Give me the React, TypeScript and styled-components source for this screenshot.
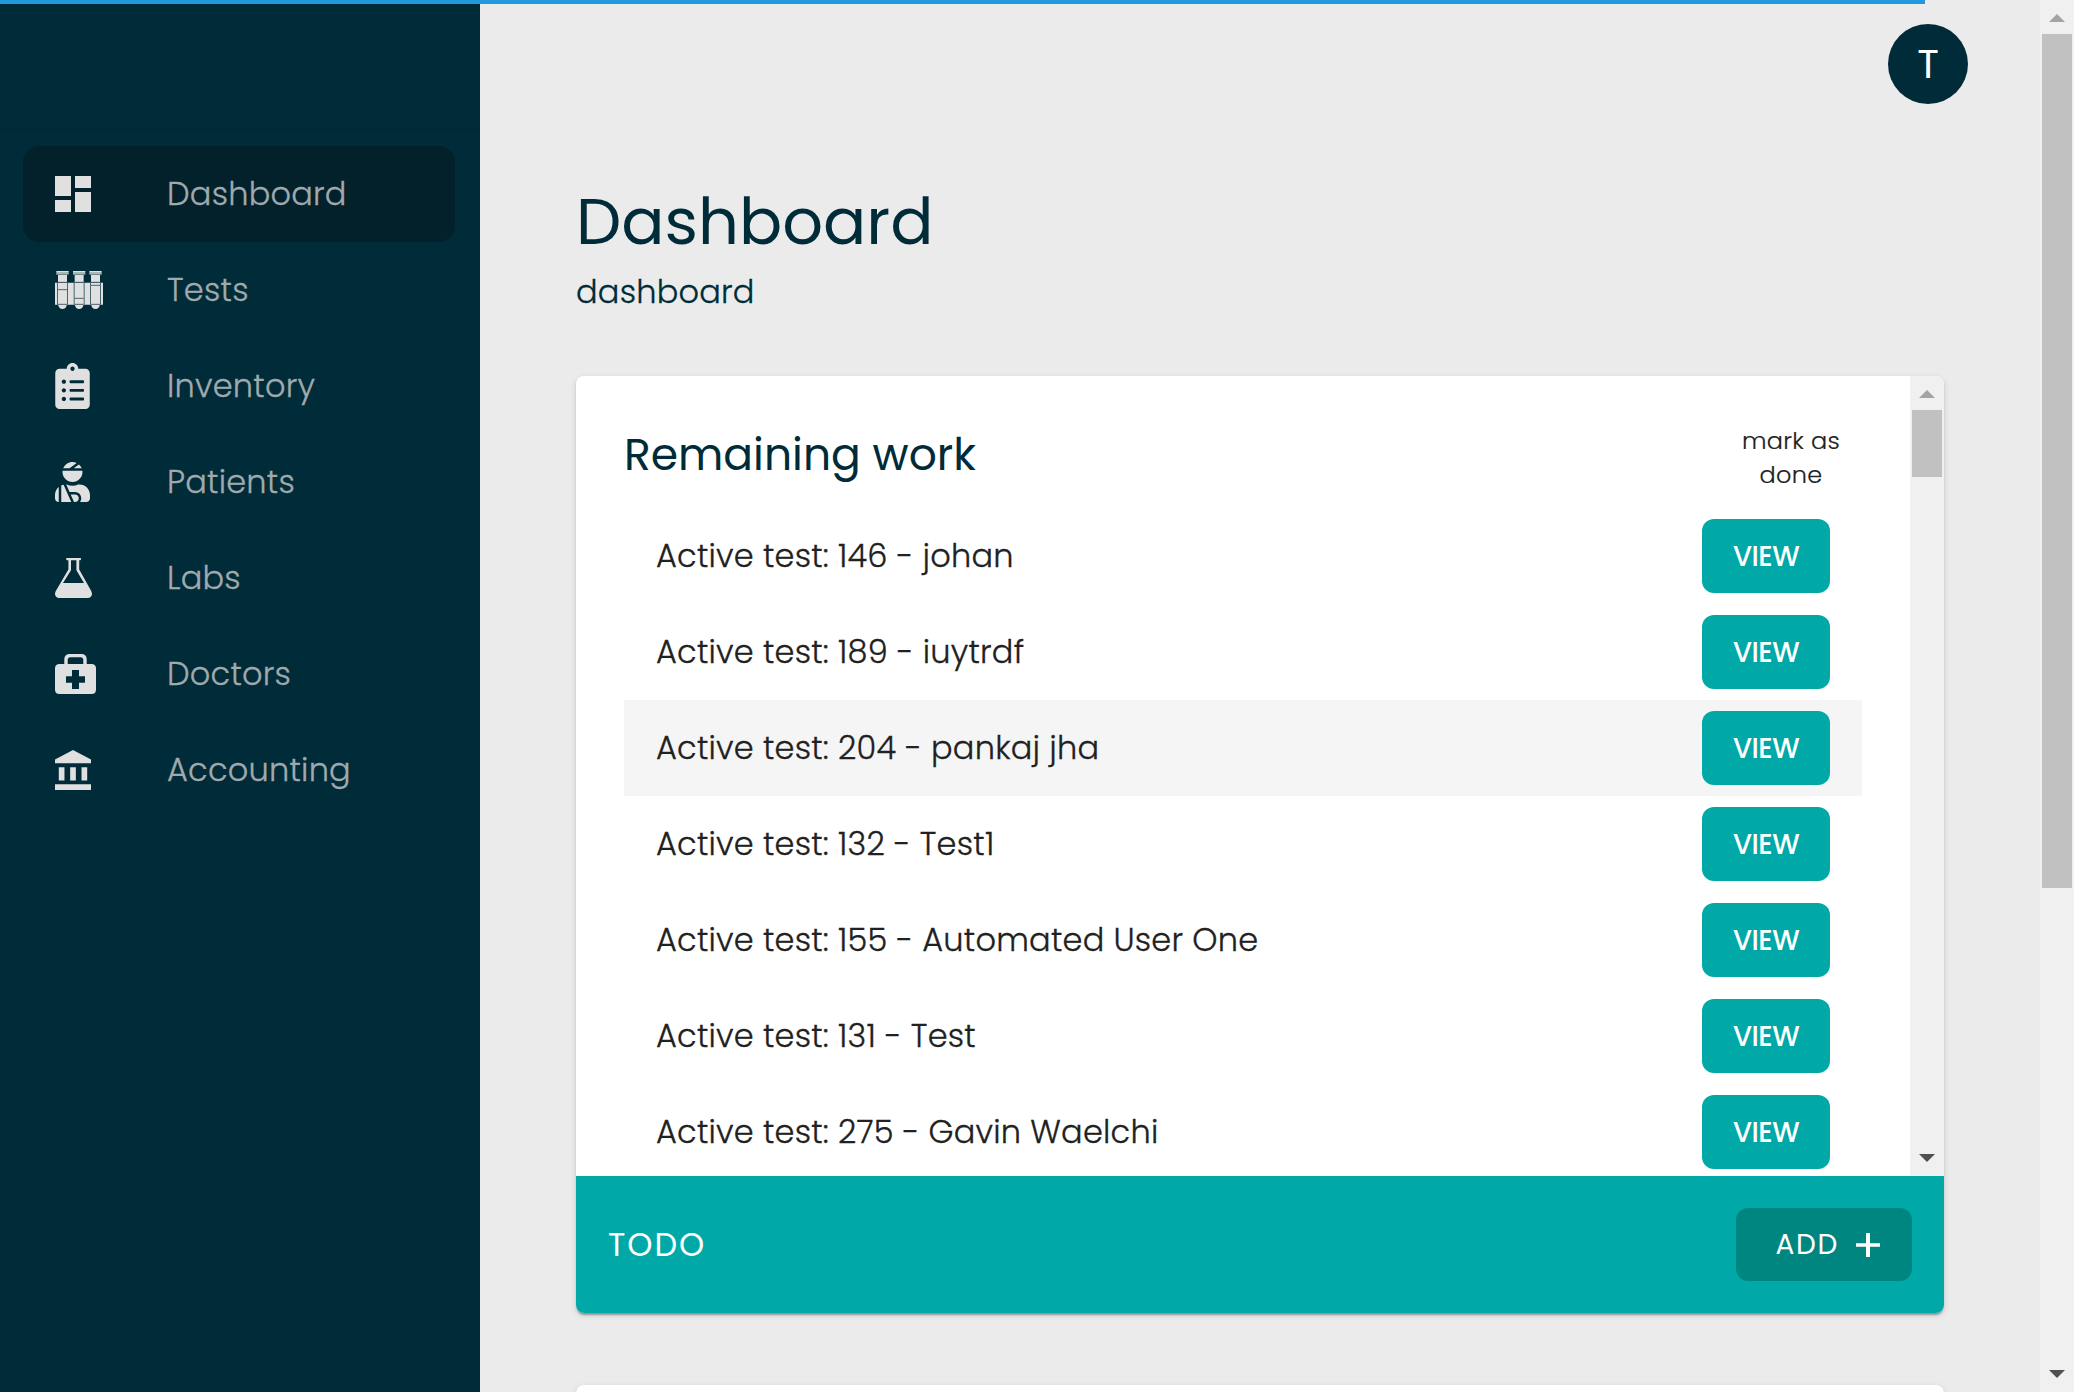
import React from 'react';
import styled, { createGlobalStyle } from 'styled-components';
import { FaClipboardList, FaUserInjured } from 'react-icons/fa';

const navy = '#002b38';
const teal = '#00a9a7';
const tealDark = '#008681';
const iconGrey = '#e0e0e0';

const GlobalStyle = createGlobalStyle`
  *, *::before, *::after { box-sizing: border-box; }
  html, body { margin: 0; height: 100%; overflow: hidden; }
  body {
    background: #ebebeb;
    color: #212121;
    font-family: Poppins, Inter, "Open Sans", sans-serif;
    font-weight: 400;
  }
  h1, h2, p { margin: 0; font-weight: inherit; }
`;

const Page = styled.div`
  display: flex;
  height: 1392px;
  overflow: hidden;
`;

const ProgressBar = styled.div`
  position: absolute;
  top: 0;
  left: 0;
  width: 1925px;
  height: 4px;
  background: #2299dd;
`;

const Sidebar = styled.aside`
  flex: none;
  width: 480px;
  background: ${navy};
`;

const SidebarHeader = styled.div`
  height: 129px;
  border-bottom: 1px solid #002733;
`;

const Nav = styled.nav`
  display: flex;
  flex-direction: column;
  padding: 17px 25px 0 23px;
`;

const NavItem = styled.a<{ $active?: boolean }>`
  display: flex;
  align-items: center;
  height: 96px;
  padding-left: 32px;
  border-radius: 16px;
  background: ${(p) => (p.$active ? '#02212b' : 'transparent')};
`;

const NavIcon = styled.span`
  display: flex;
  width: 112px;
  color: ${iconGrey};
  svg { display: block; }
`;

const BodyText = styled.span`
  font-size: 32px;
  font-weight: 300;
  line-height: 48px;
  letter-spacing: 0.22px;
  -webkit-text-stroke: 0.3px currentColor;
`;

const NavLabel = styled(BodyText)`
  color: #a0aaae;
`;

const Main = styled.main`
  flex: 1;
  min-width: 0;
  display: flex;
  flex-direction: column;
`;

const TopBar = styled.header`
  flex: none;
  display: flex;
  justify-content: flex-end;
  align-items: center;
  height: 128px;
  padding-right: 72px;
`;

const Avatar = styled.div`
  display: flex;
  align-items: center;
  justify-content: center;
  width: 80px;
  height: 80px;
  border-radius: 50%;
  background: ${navy};
  color: #fff;
  font-size: 40px;
  line-height: 40px;
`;

const Content = styled.div`
  display: flex;
  flex-direction: column;
  padding: 54px 96px 0;
`;

const Title = styled.h1`
  font-size: 64px;
  line-height: 80px;
  color: ${navy};
`;

const Breadcrumb = styled(BodyText)`
  margin-top: 6px;
  color: ${navy};
`;

const Card = styled.section`
  flex: none;
  overflow: hidden;
  border-radius: 8px;
  background: #fff;
  box-shadow: 0 4px 2px -2px rgba(0, 0, 0, 0.2), 0 2px 2px rgba(0, 0, 0, 0.14),
    0 2px 6px rgba(0, 0, 0, 0.12);
`;

const WorkCard = styled(Card)`
  margin-top: 60px;
`;

const NextCard = styled(Card)`
  height: 200px;
  margin-top: 72px;
`;

const ScrollArea = styled.div`
  display: flex;
  height: 800px;
  overflow: hidden;
`;

const ScrollBody = styled.div`
  flex: 1;
  padding: 0 48px;
`;

const WorkHeader = styled.div`
  display: flex;
  justify-content: space-between;
  height: 132px;
`;

const WorkTitle = styled.h2`
  padding-top: 49px;
  font-size: 44px;
  line-height: 60px;
  color: ${navy};
`;

const MarkHint = styled.div`
  width: 144px;
  padding: 48px 19px 0 21px;
  font-size: 24px;
  font-weight: 300;
  line-height: 34px;
  letter-spacing: 0.28px;
  text-align: center;
  -webkit-text-stroke: 0.2px currentColor;
`;

const WorkRow = styled.div<{ $hover?: boolean }>`
  display: flex;
  align-items: center;
  justify-content: space-between;
  height: 96px;
  padding: 0 32px;
  background: ${(p) => (p.$hover ? '#f5f5f5' : 'transparent')};
`;

const Button = styled.button`
  display: flex;
  align-items: center;
  justify-content: center;
  height: 73.5px;
  padding: 0;
  border: 0;
  border-radius: 12px;
  color: #fff;
  font: inherit;
  font-size: 28px;
`;

const ViewButton = styled(Button)`
  width: 128px;
  padding-top: 1px;
  background: ${teal};
  font-size: 27.5px;
  font-weight: 500;
  letter-spacing: -0.5px;
`;

const CardFooter = styled.footer`
  display: flex;
  align-items: center;
  justify-content: space-between;
  height: 137px;
  padding: 0 32px;
  background: ${teal};
  color: #fff;
`;

const FooterTitle = styled.span`
  font-size: 32px;
  letter-spacing: 2px;
`;

const AddButton = styled(Button)`
  justify-content: flex-end;
  gap: 17px;
  width: 176px;
  height: 73px;
  padding-right: 32px;
  background: ${tealDark};
  letter-spacing: 1.7px;
`;

const Scrollbar = styled.div`
  flex: none;
  display: flex;
  flex-direction: column;
  align-items: center;
  width: 34px;
  background: #f0f0f0;
`;

const Arrow = styled.div<{ $down?: boolean }>`
  flex: none;
  display: flex;
  align-items: center;
  justify-content: center;
  height: 34px;
  margin-top: ${(p) => (p.$down ? 'auto' : '0')};
  padding-top: ${(p) => (p.$down ? '0' : '2px')};
  padding-bottom: ${(p) => (p.$down ? '2px' : '0')};
  &::before {
    content: '';
    border: 8px solid transparent;
    border-top: ${(p) => (p.$down ? '8px solid #505050' : '0')};
    border-bottom: ${(p) => (p.$down ? '0' : '8px solid #a3a3a3')};
  }
`;

const Thumb = styled.div<{ $size: number }>`
  flex: none;
  width: 30px;
  height: ${(p) => p.$size}px;
  background: #c1c1c1;
`;

const InventoryIcon = styled(FaClipboardList)`
  width: 35px;
  height: 46px;
`;

const PatientIcon = styled(FaUserInjured)`
  width: 35px;
  height: 40px;
`;

const DashboardIcon = () => (
  <svg width="36" height="36" viewBox="3 3 18 18" fill="currentColor">
    <path d="M3 13h8V3H3v10zm0 8h8v-6H3v6zm10 0h8V11h-8v10zm0-18v6h8V3h-8z" />
  </svg>
);

const tubes = [
  { x: 9, level: 56 },
  { x: 59, level: 82 },
  { x: 108, level: 43 },
];

const TubesIcon = () => (
  <svg width="48" height="38" viewBox="0 0 144 114" fill="currentColor">
    <path d="M0 35h144v66H0z" />
    {tubes.map((t) => (
      <g key={t.x}>
        <path d={`M${t.x - 5} 0h37v3h-37z`} />
        <path d={`M${t.x - 5} 3h37v8h-37z`} fill="#a9b7b8" />
        <path d={`M${t.x} 12h27v21h-27z`} />
        <path d={`M${t.x} 100h27q-2 14-13.500 14t-13.500-14z`} />
        <path
          d={`M${t.x - 1.5} 34v67M${t.x + 28.5} 34v67M${t.x} ${t.level}h27M${t.x} 34h27M${t.x} 100h27`}
          stroke="#4a6570"
          strokeWidth="3"
        />
      </g>
    ))}
  </svg>
);

const FlaskIcon = () => (
  <svg width="37" height="40" viewBox="0 0 37 40" fill="currentColor">
    <path
      fillRule="evenodd"
      d="M12 0h13.200q.9 0 .9 1.100T25.200 2.200H24.200V11.500L36.200 33Q38 36.800 35.800 38.800 34.600 40 32.800 40H4.200Q2.400 40 1.200 38.800-1 36.800.8 33L13.400 11.500V2.200H12q-.9 0-.9-1.100T12 0zM16 2.200V12.300L8 25H29L21.400 12.300V2.200z"
    />
  </svg>
);

const MedkitIcon = () => (
  <svg width="41" height="40" viewBox="0 0 41 40" fill="currentColor">
    <path
      fillRule="evenodd"
      d="M4.500 10h4.800V5.500Q9.300 0 14.800 0H26.200Q31.700 0 31.700 5.500V10H36.500Q41 10 41 14.500V35.500Q41 40 36.500 40H4.500Q0 40 0 35.500V14.500Q0 10 4.500 10zM12.700 10H28.300V6Q28.300 3.300 25.600 3.300H15.400Q12.700 3.300 12.700 6zM17 16V22.200H11V28.800H17V35H24V28.800H30V22.200H24V16z"
    />
  </svg>
);

const BankIcon = () => (
  <svg width="36" height="40" viewBox="2 1 19 21" preserveAspectRatio="none" fill="currentColor">
    <path d="M4 10v7h3v-7H4zm6 0v7h3v-7h-3zM2 22h19v-3H2v3zm14-12v7h3v-7h-3zm-4.500-9L2 6v2h19V6l-9.500-5z" />
  </svg>
);

const PlusIcon = () => (
  <svg width="24" height="24" viewBox="0 0 24 24" fill="currentColor">
    <path d="M10 0h4v10.300h10v3.400H14V24h-4V13.700H0v-3.400h10z" />
  </svg>
);

const navItems = [
  { label: 'Dashboard', icon: <DashboardIcon />, active: true },
  { label: 'Tests', icon: <TubesIcon /> },
  { label: 'Inventory', icon: <InventoryIcon /> },
  { label: 'Patients', icon: <PatientIcon /> },
  { label: 'Labs', icon: <FlaskIcon /> },
  { label: 'Doctors', icon: <MedkitIcon /> },
  { label: 'Accounting', icon: <BankIcon /> },
];

const workItems = [
  { label: 'Active test: 146 - johan' },
  { label: 'Active test: 189 - iuytrdf' },
  { label: 'Active test: 204 - pankaj jha', hover: true },
  { label: 'Active test: 132 - Test1' },
  { label: 'Active test: 155 - Automated User One' },
  { label: 'Active test: 131 - Test' },
  { label: 'Active test: 275 - Gavin Waelchi' },
];

export default function App() {
  return (
    <>
      <GlobalStyle />
      <Page>
        <Sidebar>
          <SidebarHeader />
          <Nav>
            {navItems.map((item) => (
              <NavItem key={item.label} $active={item.active}>
                <NavIcon>{item.icon}</NavIcon>
                <NavLabel>{item.label}</NavLabel>
              </NavItem>
            ))}
          </Nav>
        </Sidebar>
        <Main>
          <TopBar>
            <Avatar>T</Avatar>
          </TopBar>
          <Content>
            <Title>Dashboard</Title>
            <Breadcrumb as="p">dashboard</Breadcrumb>
            <WorkCard>
              <ScrollArea>
                <ScrollBody>
                  <WorkHeader>
                    <WorkTitle>Remaining work</WorkTitle>
                    <MarkHint>mark as done</MarkHint>
                  </WorkHeader>
                  {workItems.map((item) => (
                    <WorkRow key={item.label} $hover={item.hover}>
                      <BodyText>{item.label}</BodyText>
                      <ViewButton>VIEW</ViewButton>
                    </WorkRow>
                  ))}
                </ScrollBody>
                <Scrollbar>
                  <Arrow />
                  <Thumb $size={67} />
                  <Arrow $down />
                </Scrollbar>
              </ScrollArea>
              <CardFooter>
                <FooterTitle>TODO</FooterTitle>
                <AddButton>
                  ADD
                  <PlusIcon />
                </AddButton>
              </CardFooter>
            </WorkCard>
            <NextCard />
          </Content>
        </Main>
        <Scrollbar>
          <Arrow />
          <Thumb $size={854} />
          <Arrow $down />
        </Scrollbar>
      </Page>
      <ProgressBar />
    </>
  );
}
